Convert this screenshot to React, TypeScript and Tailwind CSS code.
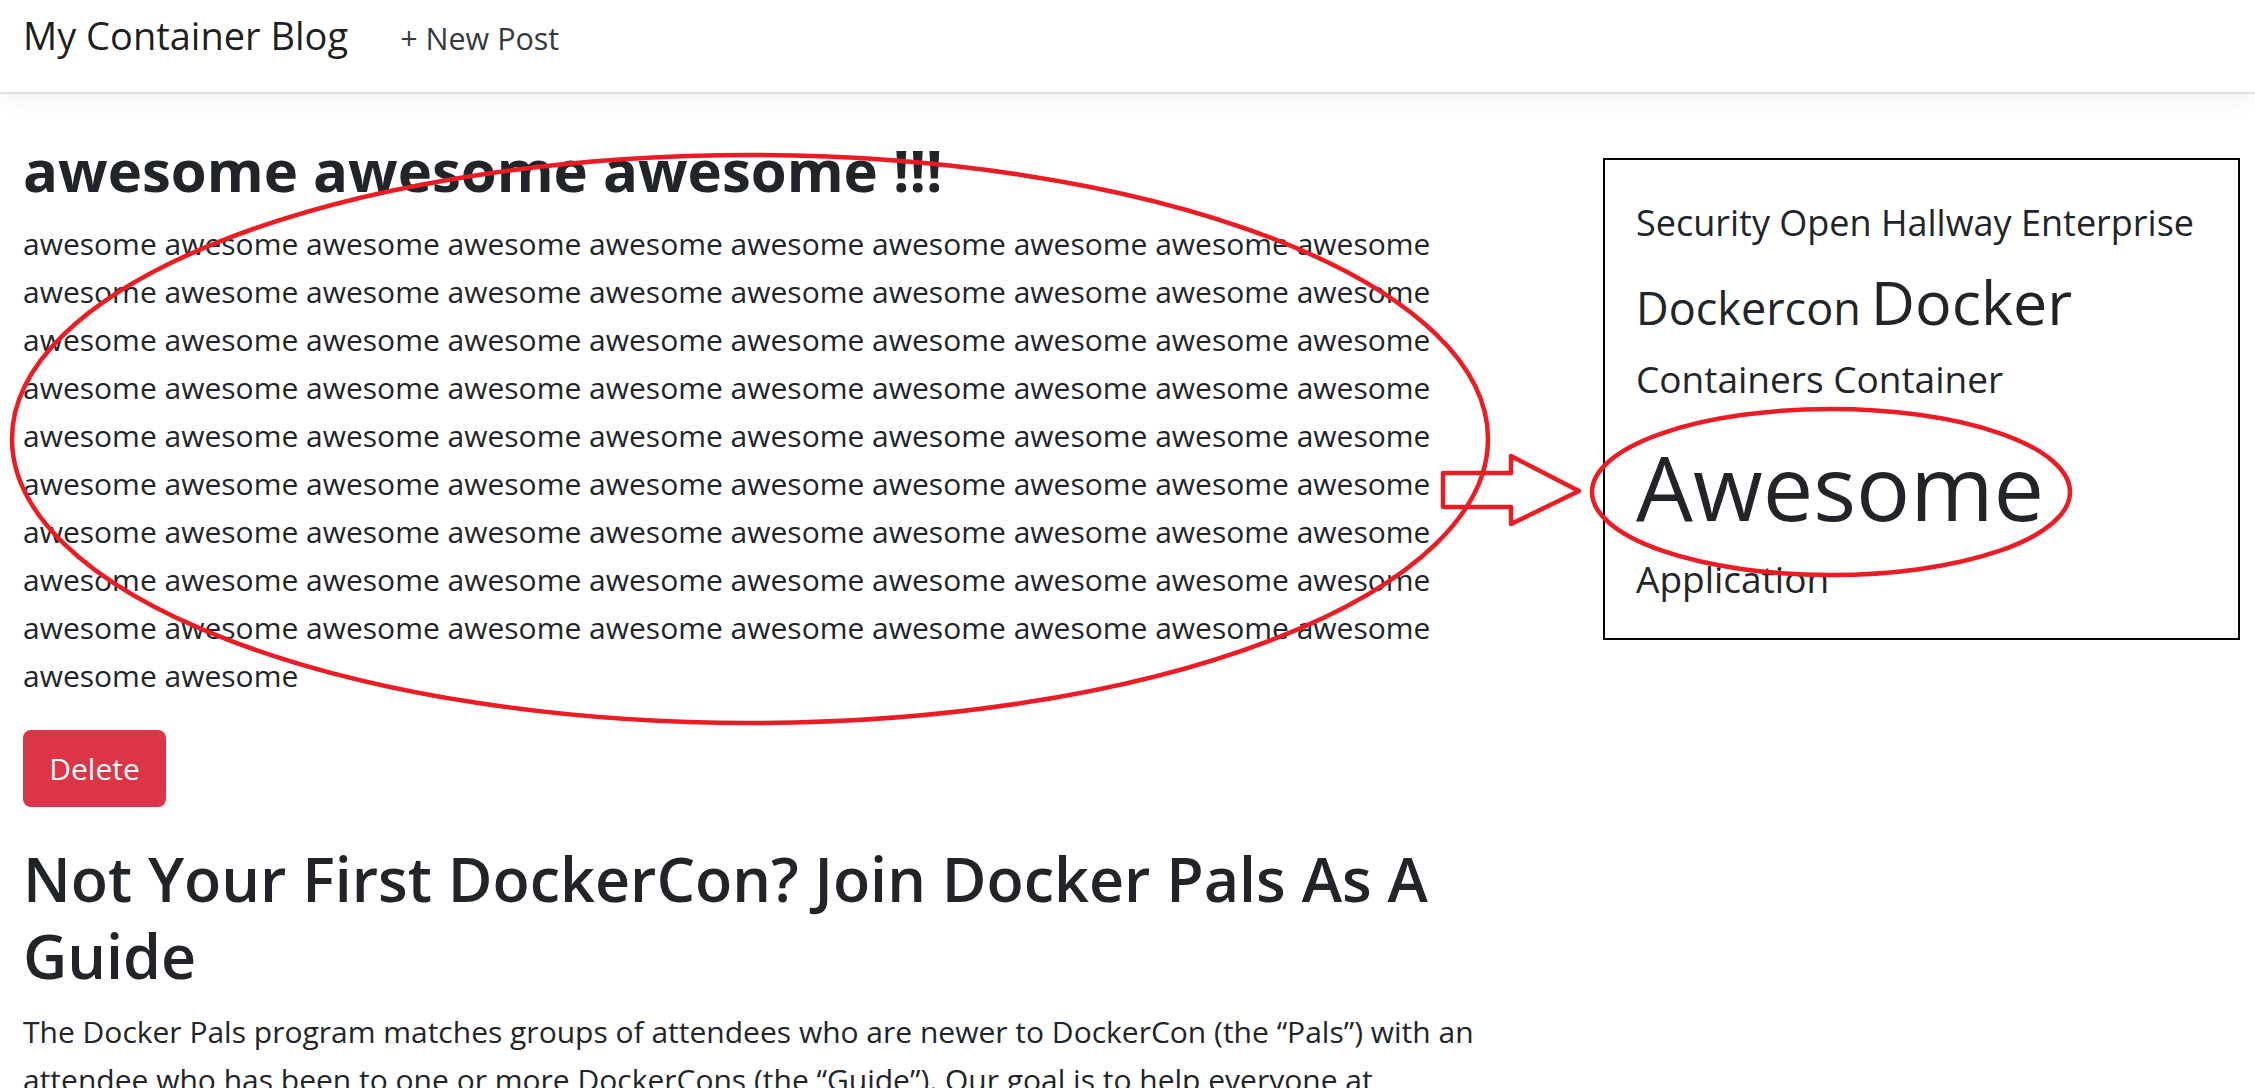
const words = Array.from({ length: 92 }, () => "awesome").join(" ");

export default function App() {
  return (
    <div className="relative min-h-screen bg-white text-[#212529] font-['Open_Sans',sans-serif]">
      <nav className="h-[94px] bg-white border-b-2 border-[#dee2e6] shadow-[0_6px_20px_rgba(0,0,0,0.05)] flex items-baseline pl-[23px] pt-[13px]">
        <a className="text-[38px] leading-[44px] text-black/90 mr-[52px]">My Container Blog</a>
        <a className="text-[30.5px] leading-[44px] text-[#343a40]">+ New Post</a>
      </nav>

      <main className="flex px-[23px]">
        <div className="w-[1470px] shrink-0">
          <h1 className="mt-[40px] text-[58px] leading-[72px] font-bold">awesome awesome awesome !!!</h1>
          <p className="mt-[14px] text-[30px] leading-[48px]">{words}</p>
          <button className="mt-[30px] w-[143px] h-[77px] rounded-[8px] bg-[#dc3545] text-white text-[30px]">
            Delete
          </button>

          <h2 className="mt-[33px] text-[61px] leading-[77px] font-semibold">
            Not Your First DockerCon? Join Docker Pals As A Guide
          </h2>
          <p className="mt-[14px] text-[30px] leading-[48px]">
            The Docker Pals program matches groups of attendees who are newer to DockerCon (the “Pals”) with an
            attendee who has been to one or more DockerCons (the “Guide”). Our goal is to help everyone at
            DockerCon make connections and feel welcome.
          </p>
        </div>

        <aside className="ml-[110px] mt-[64px]">
          <div className="w-[637px] h-[482px] border-2 border-black pl-[31px] pt-[38px]">
            <div className="text-[36px] leading-[50px] whitespace-nowrap">Security Open Hallway Enterprise</div>
            <div className="mt-[18px] flex items-baseline gap-[10px]">
              <span className="text-[45px] leading-[72px]">Dockercon</span>
              <span className="text-[61px] leading-[72px]">Docker</span>
            </div>
            <div className="mt-[10px] text-[37px] leading-[50px]">Containers Container</div>
            <div className="mt-[32px] text-[90px] leading-[100px]">Awesome</div>
            <div className="mt-[18px] text-[37px] leading-[50px]">Application</div>
          </div>
        </aside>
      </main>

      {/* red hand annotations */}
      <svg
        className="absolute top-0 left-0 pointer-events-none"
        width="2255"
        height="1088"
        viewBox="0 0 2255 1088"
        fill="none"
      >
        <ellipse cx="750" cy="439" rx="738" ry="284" stroke="#ed1c24" strokeWidth="4.5" />
        <polygon
          points="1443,473 1511,473 1511,456 1579,491 1511,524 1511,507 1443,507"
          stroke="#ed1c24"
          strokeWidth="4.5"
          strokeLinejoin="round"
        />
        <ellipse cx="1831" cy="492" rx="239" ry="83" stroke="#ed1c24" strokeWidth="4.5" />
      </svg>
    </div>
  );
}
